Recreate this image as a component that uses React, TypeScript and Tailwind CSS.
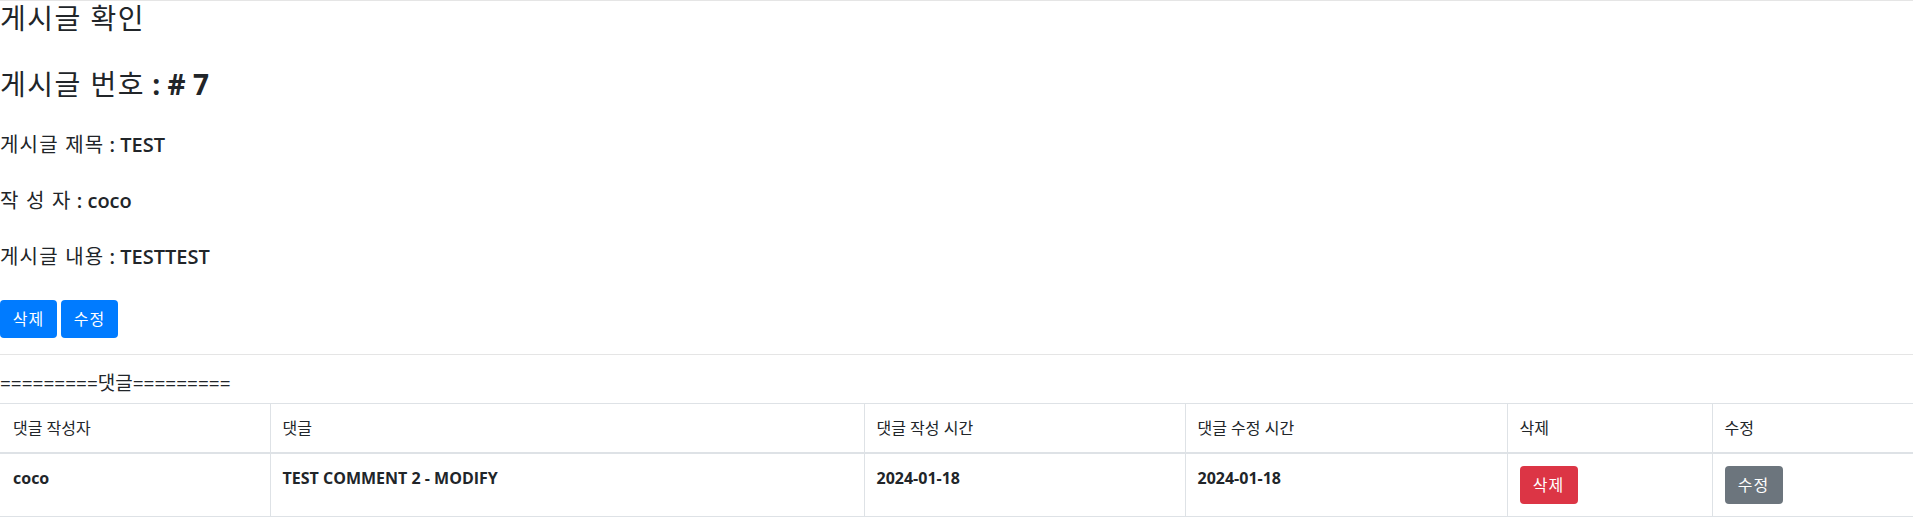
import React from 'react';

const comments = [
  {
    id: 1,
    writer: 'coco',
    content: 'TEST COMMENT 2 - MODIFY',
    createdAt: '2024-01-18',
    modifiedAt: '2024-01-18',
  },
];

const App = () => {
  return (
    <div className="min-h-screen bg-white text-[#212529] font-[family-name:'Open_Sans','Noto_Sans_CJK_KR',sans-serif] border-t border-[#e5e5e5]">
      <h3 className="text-[28px] leading-[34px] font-normal tracking-[1.5px]">게시글 확인</h3>
      <h3 className="mt-8 text-[28px] leading-[34px] font-normal">
        <span className="tracking-[1.5px]">게시글 번호</span> <b className="font-bold">: # 7</b>
      </h3>

      {/* Post detail */}
      <div className="mt-[29px] flex flex-col gap-[26px] text-[20px] leading-[30px]">
        <p className="h-[30px]">
          <span className="tracking-[1.2px]">게시글 제목</span> <b className="font-semibold">: TEST</b>
        </p>
        <p className="h-[30px]">
          <span className="tracking-[1.2px]">작 성 자</span> <b className="font-semibold">: coco</b>
        </p>
        <p className="h-[30px]">
          <span className="tracking-[1.2px]">게시글 내용</span> <b className="font-semibold">: TESTTEST</b>
        </p>
      </div>

      <div className="mt-[28px] flex gap-1">
        <button className="h-[38px] w-[57px] rounded bg-[#007bff] text-white text-base tracking-[1px]">삭제</button>
        <button className="h-[38px] w-[57px] rounded bg-[#007bff] text-white text-base tracking-[1px]">수정</button>
      </div>

      <hr className="mt-4 border-t border-[#e5e5e5]" />

      <div className="mt-4 mb-2 text-[19px] leading-[24px]">=========댓글=========</div>

      {/* Comments table */}
      <table className="w-full table-fixed border-collapse text-base leading-6">
        <thead>
          <tr>
            <td className="w-[270px] border border-l-0 border-[#dee2e6] border-b-2 py-3 pr-3 pl-[13px]">댓글 작성자</td>
            <td className="w-[594px] border border-[#dee2e6] border-b-2 p-3">댓글</td>
            <td className="w-[321px] border border-[#dee2e6] border-b-2 p-3">댓글 작성 시간</td>
            <td className="w-[322px] border border-[#dee2e6] border-b-2 p-3">댓글 수정 시간</td>
            <td className="w-[205px] border border-[#dee2e6] border-b-2 p-3">삭제</td>
            <td className="border border-r-0 border-[#dee2e6] border-b-2 p-3">수정</td>
          </tr>
        </thead>
        <tbody>
          {comments.map((c) => (
            <tr key={c.id}>
              <td className="border border-l-0 border-[#dee2e6] py-3 pr-3 pl-[13px] align-top font-bold">{c.writer}</td>
              <td className="border border-[#dee2e6] p-3 align-top font-bold">{c.content}</td>
              <td className="border border-[#dee2e6] p-3 align-top font-bold">{c.createdAt}</td>
              <td className="border border-[#dee2e6] p-3 align-top font-bold">{c.modifiedAt}</td>
              <td className="border border-[#dee2e6] p-3 align-top">
                <button className="h-[38px] w-[58px] rounded bg-[#dc3545] text-white text-base tracking-[1px]">삭제</button>
              </td>
              <td className="border border-r-0 border-[#dee2e6] p-3 align-top">
                <button className="h-[38px] w-[58px] rounded bg-[#6c757d] text-white text-base tracking-[1px]">수정</button>
              </td>
            </tr>
          ))}
        </tbody>
      </table>
    </div>
  );
};

export default App;
